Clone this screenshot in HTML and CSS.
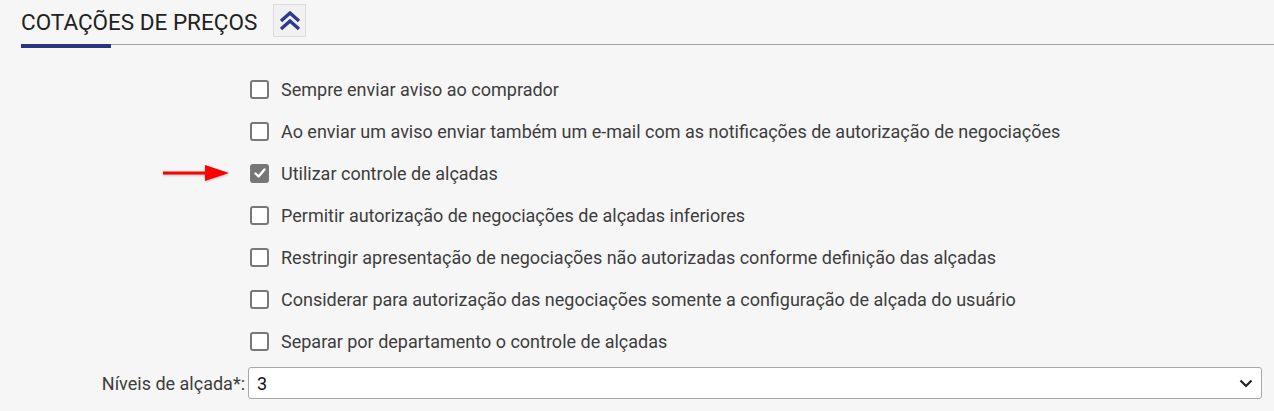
FILE: index.html
```html
<!DOCTYPE html>
<html lang="pt-BR">
<head>
<meta charset="utf-8">
<title>Cotações de preços</title>
<link rel="stylesheet" href="styles.css">
</head>
<body>
<section class="section">
  <header class="section-head">
    <h2 class="section-title">COTAÇÕES DE PREÇOS</h2>
    <button class="collapse-btn" type="button" aria-label="Recolher">
      <svg width="22" height="20" viewBox="0 0 22 20">
        <path d="M2 10 L11 2 L20 10" fill="none" stroke="#2f3a8f" stroke-width="3.4" stroke-linejoin="miter"/>
        <path d="M2 18 L11 10 L20 18" fill="none" stroke="#2f3a8f" stroke-width="3.4" stroke-linejoin="miter"/>
      </svg>
    </button>
  </header>

  <div class="options">
    <label class="option"><span class="box"></span><span class="text">Sempre enviar aviso ao comprador</span></label>
    <label class="option"><span class="box"></span><span class="text">Ao enviar um aviso enviar também um e-mail com as notificações de autorização de negociações</span></label>
    <label class="option marked">
      <svg class="arrow" width="70" height="20" viewBox="0 0 70 20">
        <rect x="0" y="8.5" width="44" height="3" fill="#ff0000"/>
        <path d="M42 2 L66 10 L42 18 Z" fill="#ff0000"/>
      </svg>
      <span class="box checked">
        <svg width="14" height="14" viewBox="0 0 14 14"><path d="M2.5 7.5 L5.6 10.5 L11.5 3.5" fill="none" stroke="#fff" stroke-width="2.4" stroke-linecap="round" stroke-linejoin="round"/></svg>
      </span><span class="text">Utilizar controle de alçadas</span></label>
    <label class="option"><span class="box"></span><span class="text">Permitir autorização de negociações de alçadas inferiores</span></label>
    <label class="option"><span class="box"></span><span class="text">Restringir apresentação de negociações não autorizadas conforme definição das alçadas</span></label>
    <label class="option"><span class="box"></span><span class="text">Considerar para autorização das negociações somente a configuração de alçada do usuário</span></label>
    <label class="option"><span class="box"></span><span class="text">Separar por departamento o controle de alçadas</span></label>
  </div>

  <div class="field">
    <span class="field-label">Níveis de alçada*:</span>
    <div class="select">
      <span class="select-value">3</span>
      <svg width="14" height="9" viewBox="0 0 14 9"><path d="M1.5 1.5 L7 7 L12.5 1.5" fill="none" stroke="#222" stroke-width="2.2"/></svg>
    </div>
  </div>
</section>
</body>
</html>
```

FILE: styles.css
```css
html, body {
  margin: 0;
  padding: 0;
  background: #f6f6f6;
  font-family: Roboto, "Liberation Sans", Arial, sans-serif;
}

.section-head {
  position: relative;
  display: flex;
  align-items: flex-start;
  margin-left: 21px;
  border-bottom: 1px solid #a3a3a3;
}

.section-head::after {
  content: "";
  position: absolute;
  left: 0;
  bottom: -4px;
  width: 90px;
  height: 4px;
  background: #2b3482;
}

.section-title {
  margin: 0;
  padding: 9px 0 9px;
  font-size: 22.5px;
  line-height: 26px;
  font-weight: 400;
  color: #222;
}

.collapse-btn {
  margin: 4px 0 0 16px;
  width: 33px;
  height: 33px;
  padding: 0;
  background: #f1f1f1;
  border: 1px solid #dcdcdc;
  display: flex;
  align-items: center;
  justify-content: center;
}

.options {
  display: flex;
  flex-direction: column;
  margin-top: 23px;
  padding-left: 250px;
}

.option {
  position: relative;
  display: flex;
  align-items: center;
  gap: 12px;
  height: 42px;
  font-size: 18px;
  color: #3d3d3d;
}

.box {
  width: 15px;
  height: 15px;
  border: 2px solid #787878;
  border-radius: 3px;
  background: #fff;
  flex: none;
  display: flex;
  align-items: center;
  justify-content: center;
}

.box.checked {
  background: #767676;
}

.arrow {
  position: absolute;
  left: -87px;
  top: 11px;
  filter: drop-shadow(0 1px 1px rgba(0,0,0,0.25));
}

.field {
  display: flex;
  align-items: center;
  margin-top: 5px;
  padding-right: 12px;
}

.field-label {
  width: 245px;
  text-align: right;
  padding-right: 3px;
  font-size: 18px;
  color: #3d3d3d;
}

.select {
  flex: 1;
  height: 30px;
  border: 1px solid #a8a8a8;
  border-radius: 3px;
  background: #fff;
  display: flex;
  align-items: center;
  justify-content: space-between;
  padding: 0 8px 0 8px;
  font-size: 18px;
  color: #111;
}
```
